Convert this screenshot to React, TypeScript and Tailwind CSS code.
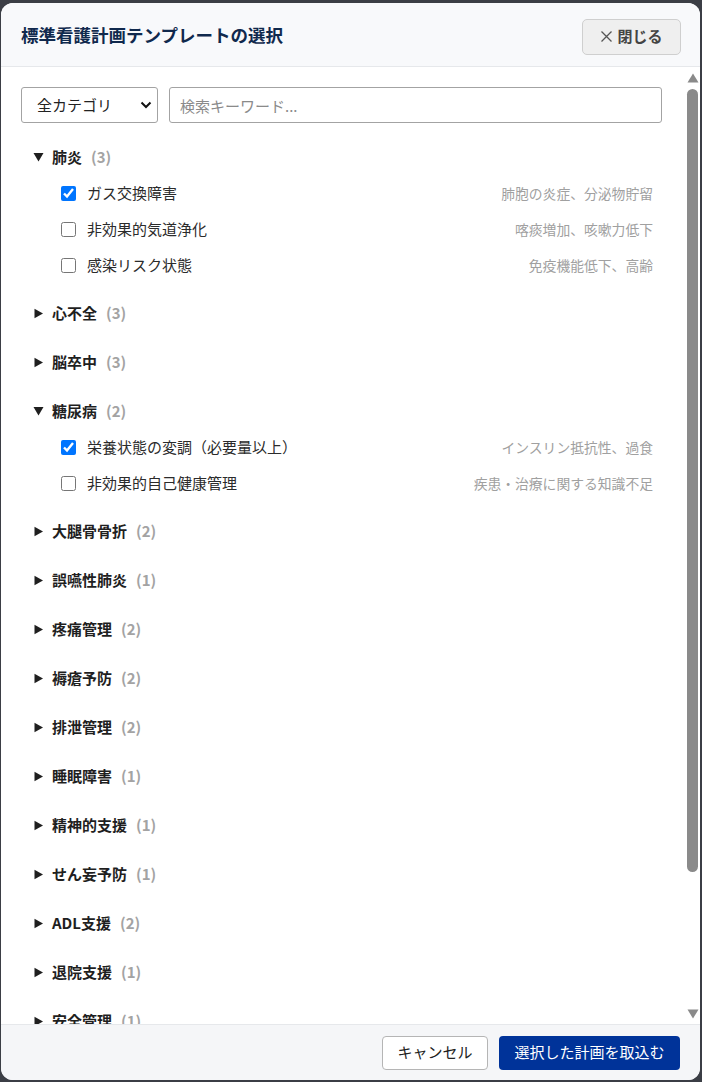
import React from "react";

type Item = { label: string; desc: string; checked?: boolean };
type Cat = { name: string; count: number; open?: boolean; items?: Item[] };

const cats: Cat[] = [
  {
    name: "肺炎",
    count: 3,
    open: true,
    items: [
      { label: "ガス交換障害", desc: "肺胞の炎症、分泌物貯留", checked: true },
      { label: "非効果的気道浄化", desc: "喀痰増加、咳嗽力低下" },
      { label: "感染リスク状態", desc: "免疫機能低下、高齢" },
    ],
  },
  { name: "心不全", count: 3 },
  { name: "脳卒中", count: 3 },
  {
    name: "糖尿病",
    count: 2,
    open: true,
    items: [
      { label: "栄養状態の変調（必要量以上）", desc: "インスリン抵抗性、過食", checked: true },
      { label: "非効果的自己健康管理", desc: "疾患・治療に関する知識不足" },
    ],
  },
  { name: "大腿骨骨折", count: 2 },
  { name: "誤嚥性肺炎", count: 1 },
  { name: "疼痛管理", count: 2 },
  { name: "褥瘡予防", count: 2 },
  { name: "排泄管理", count: 2 },
  { name: "睡眠障害", count: 1 },
  { name: "精神的支援", count: 1 },
  { name: "せん妄予防", count: 1 },
  { name: "ADL支援", count: 2 },
  { name: "退院支援", count: 1 },
  { name: "安全管理", count: 1 },
  { name: "転倒予防", count: 2 },
  { name: "呼吸管理", count: 1 },
];

const Down = () => (
  <svg width="11" height="10" viewBox="0 0 11 10" className="shrink-0">
    <polygon points="0.5,1 10.5,1 5.5,9.5" fill="#1f1f1f" />
  </svg>
);
const Right = () => (
  <svg width="11" height="11" viewBox="0 0 11 11" className="shrink-0">
    <polygon points="1.5,0.8 10,5.5 1.5,10.2" fill="#1f1f1f" />
  </svg>
);

export default function App() {
  return (
    <div
      className="w-[702px] h-[1082px] bg-[#3b3e45] overflow-hidden"
      style={{ fontFamily: '"Noto Sans CJK JP", "Noto Sans", sans-serif' }}
    >
      <div className="ml-[1px] mt-[3px] w-[699px] h-[1077px] bg-white rounded-[12px] overflow-hidden flex flex-col">
        {/* header */}
        <div className="h-[64px] shrink-0 bg-[#f8f9fb] border-b border-[#e6e8eb] flex items-center justify-between pl-[20px] pr-[19px]">
          <div className="text-[17.5px] font-bold text-[#10294d] leading-none">
            標準看護計画テンプレートの選択
          </div>
          <button className="w-[99px] h-[36px] mt-[4px] rounded-[5px] border border-[#cfcfcf] bg-[#efefef] text-[#444] text-[15px] font-bold flex items-center justify-center gap-[4px]">
            <svg width="13" height="13" viewBox="0 0 13 13">
              <path d="M1.5 1.5 L11.5 11.5 M11.5 1.5 L1.5 11.5" stroke="#555" strokeWidth="1.3" />
            </svg>
            <span>閉じる</span>
          </button>
        </div>

        {/* body */}
        <div className="flex-1 min-h-0 flex">
          <div className="flex-1 overflow-hidden pt-[20px] pl-[20px] pr-[23px]">
            <div className="flex gap-[11px]">
              <div className="relative w-[137px] h-[36px] shrink-0">
                <select className="appearance-none w-full h-full border border-[#a3a3a3] rounded-[3px] bg-white pl-[15px] text-[15px] text-[#222] outline-none">
                  <option>全カテゴリ</option>
                </select>
                <svg
                  width="12"
                  height="8"
                  viewBox="0 0 12 8"
                  className="absolute right-[6px] top-[14px] pointer-events-none"
                >
                  <path d="M1.5 1.5 L6 6 L10.5 1.5" stroke="#111" strokeWidth="2" fill="none" />
                </svg>
              </div>
              <input
                className="flex-1 min-w-0 h-[36px] border border-[#a3a3a3] rounded-[3px] px-[10px] text-[15px] text-[#222] placeholder:text-[#8a8a8a] outline-none"
                placeholder="検索キーワード..."
              />
            </div>

            <div className="mt-[16px]">
              {cats.map((c) => (
                <div key={c.name} className={c.open ? "pb-[12px]" : "pb-[13px]"}>
                  <div className="h-[36px] flex items-center pl-[12px]">
                    {c.open ? <Down /> : <Right />}
                    <span className="ml-[8px] text-[15px] font-bold text-[#1f1f1f]">{c.name}</span>
                    <span className="ml-[9px] text-[15px] font-bold text-[#a3a3a3]">({c.count})</span>
                  </div>
                  {c.open &&
                    c.items!.map((it) => (
                      <div key={it.label} className="h-[36px] flex items-center pl-[40px] pr-[9px]">
                        <input
                          type="checkbox"
                          defaultChecked={it.checked}
                          className="w-[15px] h-[15px] m-0 shrink-0"
                        />
                        <span className="ml-[11px] text-[15px] text-[#2b2b2b]">{it.label}</span>
                        <span className="ml-auto text-[13.8px] text-[#a0a0a0]">{it.desc}</span>
                      </div>
                    ))}
                </div>
              ))}
            </div>
          </div>

          {/* scrollbar */}
          <div className="w-[15px] shrink-0 bg-white flex flex-col items-center pt-[6px] pb-[5px]">
            <svg width="12" height="10" viewBox="0 0 12 10" className="shrink-0">
              <polygon points="6,0.5 11.5,9.5 0.5,9.5" fill="#8a8a8a" />
            </svg>
            <div className="mt-[6px] w-[11px] h-[783px] rounded-t-[6px] rounded-b-[6px] bg-[#8a8a8a] shrink-0" />
            <div className="flex-1" />
            <svg width="12" height="10" viewBox="0 0 12 10" className="shrink-0">
              <polygon points="0.5,0.5 11.5,0.5 6,9.5" fill="#8a8a8a" />
            </svg>
          </div>
        </div>

        {/* footer */}
        <div className="h-[56px] shrink-0 bg-[#f5f6f8] border-t border-[#e6e8eb] flex items-center justify-end gap-[11px] pr-[20px]">
          <button className="w-[106px] h-[34px] rounded-[4px] border border-[#b5b5b5] bg-white text-[15px] text-[#222]">
            キャンセル
          </button>
          <button className="w-[181px] h-[34px] rounded-[4px] bg-[#003399] text-[15px] text-white">
            選択した計画を取込む
          </button>
        </div>
      </div>
    </div>
  );
}
